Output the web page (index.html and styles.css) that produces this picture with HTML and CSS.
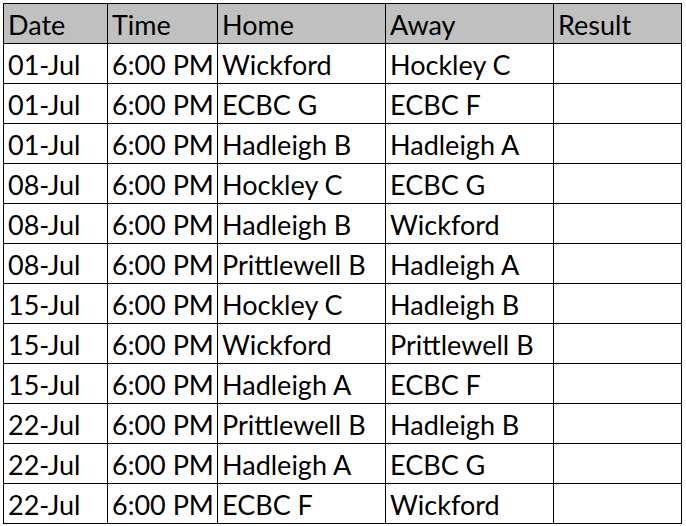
FILE: index.html
```html
<!DOCTYPE html>
<html>
<head>
<meta charset="utf-8">
<link rel="stylesheet" href="styles.css">
</head>
<body>
<div class="sheet">
  <div class="cell head">Date</div><div class="cell head">Time</div><div class="cell head">Home</div><div class="cell head">Away</div><div class="cell head">Result</div>
  <div class="cell">01-Jul</div><div class="cell">6:00 PM</div><div class="cell">Wickford</div><div class="cell">Hockley C</div><div class="cell"></div>
  <div class="cell">01-Jul</div><div class="cell">6:00 PM</div><div class="cell">ECBC G</div><div class="cell">ECBC F</div><div class="cell"></div>
  <div class="cell">01-Jul</div><div class="cell">6:00 PM</div><div class="cell">Hadleigh B</div><div class="cell">Hadleigh A</div><div class="cell"></div>
  <div class="cell">08-Jul</div><div class="cell">6:00 PM</div><div class="cell">Hockley C</div><div class="cell">ECBC G</div><div class="cell"></div>
  <div class="cell">08-Jul</div><div class="cell">6:00 PM</div><div class="cell">Hadleigh B</div><div class="cell">Wickford</div><div class="cell"></div>
  <div class="cell">08-Jul</div><div class="cell">6:00 PM</div><div class="cell">Prittlewell B</div><div class="cell">Hadleigh A</div><div class="cell"></div>
  <div class="cell">15-Jul</div><div class="cell">6:00 PM</div><div class="cell">Hockley C</div><div class="cell">Hadleigh B</div><div class="cell"></div>
  <div class="cell">15-Jul</div><div class="cell">6:00 PM</div><div class="cell">Wickford</div><div class="cell">Prittlewell B</div><div class="cell"></div>
  <div class="cell">15-Jul</div><div class="cell">6:00 PM</div><div class="cell">Hadleigh A</div><div class="cell">ECBC F</div><div class="cell"></div>
  <div class="cell">22-Jul</div><div class="cell">6:00 PM</div><div class="cell">Prittlewell B</div><div class="cell">Hadleigh B</div><div class="cell"></div>
  <div class="cell">22-Jul</div><div class="cell">6:00 PM</div><div class="cell">Hadleigh A</div><div class="cell">ECBC G</div><div class="cell"></div>
  <div class="cell">22-Jul</div><div class="cell">6:00 PM</div><div class="cell">ECBC F</div><div class="cell">Wickford</div><div class="cell"></div>
</div>
</body>
</html>
```
FILE: styles.css
```css
html, body {
  margin: 0;
  padding: 0;
  background: #ffffff;
}
body {
  padding: 3px 0 0 3px;
}
.sheet {
  display: grid;
  grid-template-columns: 103px 109px 167px 167px 127px;
  grid-auto-rows: 39px;
  gap: 1px;
  padding: 1px;
  background: #000000;
  width: max-content;
  font-family: Lato, "Open Sans", sans-serif;
  font-size: 27px;
  color: #000000;
}
.cell {
  background: #ffffff;
  padding: 2px 0 0 4px;
  display: flex;
  align-items: center;
  white-space: nowrap;
  overflow: hidden;
  line-height: 1;
}
.head {
  background: #c0c0c0;
}
```
